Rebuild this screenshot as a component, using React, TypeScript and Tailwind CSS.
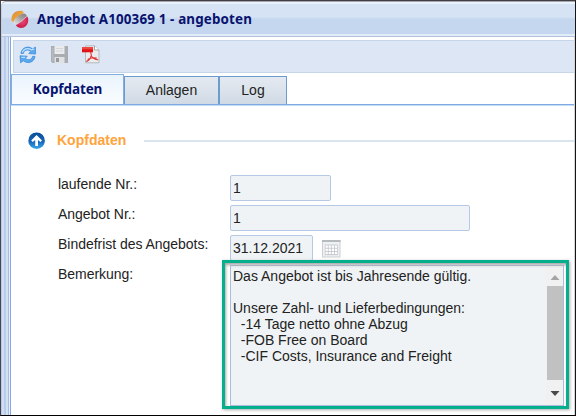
import React from 'react';

const arial = "font-['Liberation_Sans',Arial,sans-serif]";

function LogoIcon() {
  return (
    <svg width="18" height="19" viewBox="0 0 18 19" className="block shrink-0">
      <defs>
        <linearGradient id="lgO" x1="0" y1="0" x2="1" y2="1">
          <stop offset="0" stopColor="#d98a3a" />
          <stop offset="1" stopColor="#fbb93c" />
        </linearGradient>
        <linearGradient id="lgG" x1="0" y1="1" x2="1" y2="0">
          <stop offset="0" stopColor="#ececec" />
          <stop offset=".6" stopColor="#a39c98" />
          <stop offset="1" stopColor="#857c78" />
        </linearGradient>
        <radialGradient id="lgR" cx=".5" cy=".4" r=".6">
          <stop offset="0" stopColor="#e8507c" />
          <stop offset="1" stopColor="#cc1747" />
        </radialGradient>
      </defs>
      <path d="M0.5 10.5 C-.3 4 5 -.3 11.5 1 L12.8 2.8 L2 12 Z" fill="url(#lgO)" />
      <path d="M2.6 12.4 C3 8.4 7.5 4.6 13 3.4 C15 4 16 5.4 15.6 6.4 C11.4 8.6 9.4 12.4 5 14.6 C3.6 14.4 2.7 13.4 2.6 12.4Z" fill="url(#lgG)" />
      <path d="M4.8 15 C9 13.6 11.8 9.6 16.4 6.4 C18.6 11 16.4 16.8 11.6 17.8 C8.8 18.3 6 17.2 4.8 15Z" fill="url(#lgR)" />
    </svg>
  );
}

function RefreshIcon() {
  return (
    <svg width="18" height="18" viewBox="0 0 18 18" className="block shrink-0">
      <g strokeWidth=".7" strokeLinejoin="round">
        <path d="M1.9 7.4 C2.6 1.4 9.4 -.9 13.6 3 L16.4 1 L16.6 8 L9.8 7.6 L11.7 5.4 C8.8 3 5 4 4.4 7.4Z" fill="#5ba8ee" stroke="#3386da" />
        <path d="M16 10.4 C15.4 16.2 8.8 18.4 4.4 14.8 L1.6 16.8 L1 9.8 L8.2 10.2 L6.3 12.4 C9 14.6 12.8 13.8 13.5 10.4Z" fill="#5ba8ee" stroke="#3386da" />
      </g>
      <path d="M3.2 6.4 C4.4 2.8 8.8 1.4 12.4 3.8 L15.4 3M2.4 11.2L6.2 11.4" fill="none" stroke="#c3e2fc" strokeWidth="1.1" />
    </svg>
  );
}

function SaveIcon() {
  return (
    <svg width="17" height="17" viewBox="0 0 17 17" className="block shrink-0">
      <path d="M0 0H17V17H1.5L0 15.5Z" fill="#a9acb0" />
      <rect x="3.5" y="0" width="10" height="8" fill="#e9ebed" />
      <path d="M5 2.5H12M5 5H12" stroke="#d4d7da" />
      <rect x="3.5" y="11" width="10" height="6" fill="#dfe1e3" />
      <rect x="5" y="12" width="3" height="4" fill="#96999d" />
      <rect x="1.2" y="1.5" width="1.2" height="14" fill="#bcbfc2" />
    </svg>
  );
}

function PdfIcon() {
  return (
    <svg width="18" height="19" viewBox="0 0 18 19" className="block shrink-0">
      <path d="M3.5 .8H12.5L17 5V17.8H3.5Z" fill="#ececed" stroke="#b7babd" />
      <path d="M12.5 .8V5H17" fill="#fff" stroke="#a3a6aa" />
      <rect x="0" y="2.3" width="11" height="5" fill="#df1515" />
      <rect x="0" y="2.3" width="11" height="2" fill="#f04642" />
      <path d="M9 6.8 C8 8.6 10 9.4 9.2 11 C8.4 13.2 6.4 16 4.2 16.4 M9.2 10.8 C10.5 13.3 13.4 14.6 16.2 14.8 M5.5 14.4 C8 12.9 11 12.5 14.8 13" fill="none" stroke="#df3535" strokeWidth="1.1" />
    </svg>
  );
}

function CollapseIcon() {
  return (
    <svg width="18" height="18" viewBox="0 0 18 18" className="block shrink-0">
      <defs>
        <linearGradient id="upB" x1="0" y1="0" x2="0" y2="1">
          <stop offset="0" stopColor="#0a4c94" />
          <stop offset=".55" stopColor="#1767b8" />
          <stop offset="1" stopColor="#38a7ee" />
        </linearGradient>
      </defs>
      <circle cx="8.6" cy="8.7" r="8.3" fill="url(#upB)" />
      <path d="M8.6 3L14 8.4L12.4 10.1L10 8V14H7.2V8L4.8 10.1L3.2 8.4Z" fill="#fff" />
    </svg>
  );
}

function CalendarIcon() {
  return (
    <svg width="19" height="18" viewBox="0 0 19 18" className="block shrink-0">
      <rect x=".5" y=".5" width="17.5" height="16.5" fill="#eef0f1" stroke="#ccd0d3" />
      <rect x="0" y="0" width="18.5" height="2" fill="#b5babd" />
      <rect x="2.8" y="4.6" width="13" height="10.5" fill="#bfc5ca" />
      {[0, 1, 2].map((r) =>
        [0, 1, 2, 3].map((c) => (
          <rect key={`${r}-${c}`} x={3.5 + c * 3.1} y={5.4 + r * 3.2} width="2.3" height="2.4" fill="#fff" />
        )),
      )}
    </svg>
  );
}

function Label({ children }: { children: React.ReactNode }) {
  return <div className="w-[172px] shrink-0 pt-px leading-4 tracking-[-0.03px] whitespace-nowrap">{children}</div>;
}

export default function App() {
  return (
    <div className={`relative flex h-[416px] w-[576px] flex-col overflow-hidden border border-t-[#433e40] border-r-[#151515] border-b-black border-l-[#49454a] bg-white text-[14px] text-[#222] ${arial}`}>
      <header className="flex h-9 shrink-0 items-center rounded-tl-[5px] border-t border-b border-l border-t-[#a3a7b2] border-b-[#b2c1dc] border-l-[#c3cfe2] bg-[linear-gradient(#eaf2fc_0_2px,#d6e3f5_2px_15px,#c5d7ee_17px_32px,#e2ebf8_32px)] pl-[9px]">
        <LogoIcon />
        <h1 className="mt-[2px] ml-[8px] font-['Noto_Sans',sans-serif] text-[13.4px] leading-none font-bold tracking-[0.15px] whitespace-nowrap text-[#08136f]">Angebot A100369 1 - angeboten</h1>
      </header>

      <div className="flex min-h-0 grow">
        <div className="w-[10px] shrink-0 bg-[linear-gradient(90deg,#b7caea_0_1px,#cfdef4_1px_3px,#b8cdeb_3px_5px,#d5e1f3_5px_7px,#a5bde3_7px_8px,#e7effa_8px_9px,#83a9e1_9px)]" />
        <main className="flex min-w-0 grow flex-col border-r border-[#d5d5d8] pt-[3px]">
          <div className="ml-[2px] flex h-[33px] shrink-0 items-center gap-[14px] border border-r-0 border-[#c7d5e9] bg-[#dce6f5] pb-[4px] pl-[5px]">
            <RefreshIcon />
            <SaveIcon />
            <PdfIcon />
          </div>

          <nav className="mt-px flex h-[30px] shrink-0 items-end">
            <div className="flex h-[30px] w-[113px] items-center justify-center border border-b-0 border-[#85aee0] bg-[linear-gradient(#eaf3fd,#fafdff)] pb-px font-['Noto_Sans',sans-serif] text-[13.5px] font-bold tracking-[-0.1px] text-[#08136f]">Kopfdaten</div>
            <div className="flex h-[28px] w-[95px] items-center justify-center border border-b-0 border-[#6c9ccd] bg-[linear-gradient(#e5eaf1,#d0dae5)] pb-px">Anlagen</div>
            <div className="flex h-[28px] w-[68px] items-center justify-center border border-b-0 border-[#6c9ccd] bg-[linear-gradient(#e5eaf1,#d0dae5)] pb-px">Log</div>
          </nav>
          <div className="h-[2px] shrink-0 bg-[linear-gradient(#7fabe2_50%,#c3dcf5_50%)]" />

          <section className="flex grow flex-col pl-[17px]">
            <div className="mt-[25px] flex h-[20px] shrink-0 items-center">
              <CollapseIcon />
              <h2 className="-mt-[2px] ml-[11px] w-[87px] font-bold text-[#ffa33a]">Kopfdaten</h2>
              <div className="h-[2px] grow bg-[#dae3f0]" />
            </div>

            <div className="mt-[24px] ml-[30px] flex flex-col">
              <div className="flex h-[30px]">
                <Label>laufende Nr.:</Label>
                <div className="flex h-[26px] w-[101px] items-center rounded-[2px] border border-[#b5c8e6] bg-[#eff3f5] pl-[2px]">1</div>
              </div>
              <div className="flex h-[30px]">
                <Label>Angebot Nr.:</Label>
                <div className="flex h-[26px] w-[240px] items-center rounded-[2px] border border-[#b5c8e6] bg-[#eff3f5] pl-[2px]">1</div>
              </div>
              <div className="flex h-[30px]">
                <Label>Bindefrist des Angebots:</Label>
                <div className="flex h-[26px] w-[83px] items-center rounded-[2px] border border-[#b5c8e6] bg-[#eff3f5] pl-[2px]">31.12.2021</div>
                <div className="mt-[5px] ml-[9px]"><CalendarIcon /></div>
              </div>
              <div className="flex">
                <Label>Bemerkung:</Label>
                <div className="flex h-[141px] w-[334px] border border-[#a9bddb] bg-[#eff3f5]">
                  <div className="grow pt-[2px] pl-[2px] leading-4 whitespace-pre">{'Das Angebot ist bis Jahresende gültig.\n\nUnsere Zahl- und Lieferbedingungen:\n  -14 Tage netto ohne Abzug\n  -FOB Free on Board\n  -CIF Costs, Insurance and Freight'}</div>
                  <div className="flex w-[17px] shrink-0 flex-col items-center bg-[#f1f1f1]">
                    <svg width="10" height="5" className="mt-[9px]"><path d="M5 0L9.5 5H.5Z" fill="#a5a5a5" /></svg>
                    <div className="mt-[6px] h-[94px] w-[16px] bg-[#c1c1c1]" />
                    <svg width="10" height="5" className="mt-[11px]"><path d="M.5 0H9.5L5 5Z" fill="#494949" /></svg>
                  </div>
                </div>
              </div>
            </div>
          </section>
        </main>
      </div>

      <div className="pointer-events-none absolute top-[259px] left-[221px] h-[149px] w-[347px] border-[3px] border-[#05ae8c] shadow-[1px_1px_3px_#aaa,inset_1px_2px_3px_#a8a8a8]" />
    </div>
  );
}
